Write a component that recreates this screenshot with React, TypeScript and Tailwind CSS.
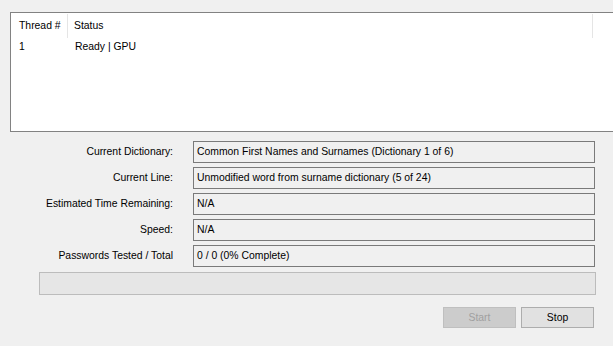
import React from 'react';

const fields: { label: string; value: string }[] = [
  { label: 'Current Dictionary:', value: 'Common First Names and Surnames (Dictionary 1 of 6)' },
  { label: 'Current Line:', value: 'Unmodified word from surname dictionary (5 of 24)' },
  { label: 'Estimated Time Remaining:', value: 'N/A' },
  { label: 'Speed:', value: 'N/A' },
  { label: 'Passwords Tested / Total', value: '0 / 0 (0% Complete)' },
];

const App: React.FC = () => {
  return (
    <div
      className="w-[613px] h-[346px] bg-[#f0f0f0] overflow-hidden text-[10.4px] text-black pt-[12px]"
      style={{ fontFamily: '"Liberation Sans", Arial, sans-serif' }}
    >
      {/* thread list */}
      <div className="ml-[10px] h-[120px] bg-white border-l border-t border-b border-[#828282]">
        <div className="flex h-[25px] items-center pt-[1px]">
          <div className="w-[57px] pl-[8px] border-r border-[#e5e5e5] h-full flex items-center">Thread #</div>
          <div className="w-[525px] pl-[6px] border-r border-[#e5e5e5] h-full flex items-center">Status</div>
        </div>
        <div className="flex h-[17px] items-center">
          <div className="w-[58px] pl-[8px]">1</div>
          <div className="pl-[6px]">Ready | GPU</div>
        </div>
      </div>

      {/* progress fields */}
      <div className="mt-[9px] flex flex-col gap-[4px]">
        {fields.map((f) => (
          <div key={f.label} className="flex items-center h-[22px]">
            <div className="w-[175px] text-right pr-[2px]">{f.label}</div>
            <div className="ml-[18px] w-[402px] h-[22px] border border-[#7a7a7a] bg-[#f0f0f0] flex items-center pl-[3px]">
              {f.value}
            </div>
          </div>
        ))}
      </div>

      <div className="mt-[5px] ml-[39px] w-[557px] h-[23px] bg-[#e6e6e6] border border-[#bcbcbc]" />

      <div className="mt-[12px] flex justify-end gap-[5px] pr-[19px]">
        <button className="w-[73px] h-[21px] bg-[#cccccc] border border-[#bfbfbf] text-[#a0a0a0]">Start</button>
        <button className="w-[73px] h-[21px] bg-[#e1e1e1] border border-[#adadad]">Stop</button>
      </div>
    </div>
  );
};

export default App;
